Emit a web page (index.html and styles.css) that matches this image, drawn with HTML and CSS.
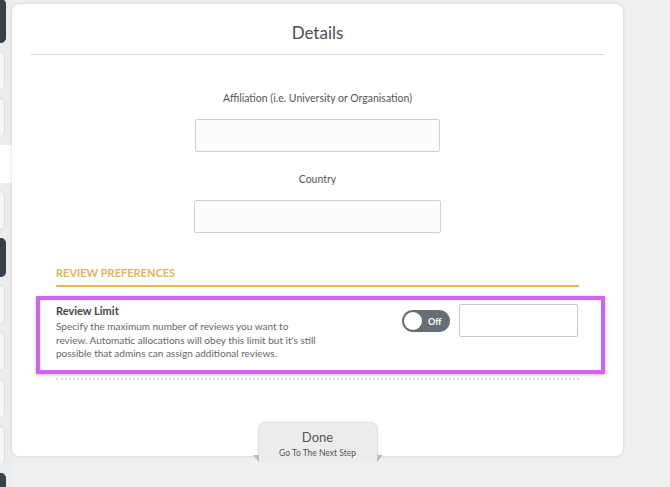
FILE: index.html
```html
<!DOCTYPE html>
<html lang="en">

<head>
    <meta charset="UTF-8">
    <meta name="viewport" content="width=device-width, initial-scale=1.0">
    <title>Details</title>
    <link rel="stylesheet" href="styles.css">
</head>

<body>
    <div class="layout">
        <nav class="rail">
            <span class="rail-tab dark first"></span>
            <span class="rail-tab"></span>
            <span class="rail-tab"></span>
            <span class="rail-gap"></span>
            <span class="rail-tab"></span>
            <span class="rail-tab dark"></span>
            <span class="rail-tab"></span>
            <span class="rail-tab"></span>
            <span class="rail-tab"></span>
            <span class="rail-tab"></span>
            <span class="rail-tab dark"></span>
        </nav>

        <main class="main">
            <div class="card">
                <h2 class="card-title">Details</h2>

                <div class="field first-field">
                    <label for="affiliation">Affiliation (i.e. University or Organisation)</label>
                    <input type="text" id="affiliation" class="text-input">
                </div>

                <div class="field country-field">
                    <label for="country">Country</label>
                    <input type="text" id="country" class="text-input wide">
                </div>

                <div class="prefs">
                    <h3 class="prefs-title">REVIEW PREFERENCES</h3>
                </div>

                <div class="highlight">
                    <div class="pref-row">
                        <div class="pref-text">
                            <h4>Review Limit</h4>
                            <p>Specify the maximum number of reviews you want to review. Automatic allocations will obey this limit but it's still possible that admins can assign additional reviews.</p>
                        </div>
                        <div class="pref-controls">
                            <span class="toggle"><span class="knob"></span>Off</span>
                            <input type="text" class="limit-input">
                        </div>
                    </div>
                </div>
                <div class="dotted"></div>

                <div class="done-wrap">
                    <button class="done">
                        <span class="done-main">Done</span>
                        <span class="done-sub">Go To The Next Step</span>
                    </button>
                </div>
            </div>
        </main>
    </div>
</body>

</html>
```

FILE: styles.css
```css
body {
    margin: 0;
    background: #efefef;
    font-family: 'Lato', 'Open Sans', sans-serif;
    color: #555;
    height: 487px;
    overflow: hidden;
}

.layout {
    display: flex;
    height: 100%;
}

/* left step rail */
.rail {
    width: 12px;
    flex-shrink: 0;
    display: flex;
    flex-direction: column;
    gap: 8px;
    background: #ececec;
    overflow: hidden;
}

.rail-tab {
    display: block;
    width: 4px;
    height: 37px;
    flex-shrink: 0;
    background: #f6f6f6;
    border: 1px solid #dcdcdc;
    border-left: none;
    border-radius: 0 5px 5px 0;
}

.rail-tab.dark {
    width: 5px;
    height: 37px;
    background: #36424d;
    border-color: #36424d;
}

.rail-tab.first {
    height: 42px;
    margin-top: -1px;
}

.rail-gap {
    display: block;
    height: 38px;
    flex-shrink: 0;
    background: #fff;
}

.main {
    flex: 1;
    padding-top: 4px;
}

.card {
    width: 611px;
    height: 452px;
    box-sizing: border-box;
    padding: 0 18px;
    background: #fff;
    border-radius: 7px;
    box-shadow: 0 0 3px rgba(0, 0, 0, 0.18);
    display: flex;
    flex-direction: column;
}

.card-title {
    margin: 0;
    padding: 18px 0 11px;
    font-size: 17px;
    font-weight: normal;
    text-align: center;
    color: #4a4f54;
    border-bottom: 1px solid #dedede;
}

.field {
    display: flex;
    flex-direction: column;
    align-items: center;
}

.field label {
    font-size: 10.5px;
    line-height: 14px;
    color: #555;
    margin-bottom: 14px;
}

.first-field {
    margin-top: 36px;
}

.country-field {
    margin-top: 20px;
}

.text-input {
    width: 245px;
    height: 33px;
    box-sizing: border-box;
    border: 1px solid #cfcfcf;
    border-radius: 2px;
    background: #fcfcfc;
}

.text-input.wide {
    width: 247px;
}

.prefs {
    margin: 33px 26px 0;
    border-bottom: 2px solid #efb24e;
}

.prefs-title {
    margin: 0;
    padding-bottom: 5px;
    font-size: 11px;
    line-height: 14px;
    font-weight: bold;
    color: #e8b35c;
}

.highlight {
    margin: 9px 0 0 6px;
    border: 4px solid #d65ff7;
    box-shadow: 0 1px 3px rgba(0, 0, 0, 0.25);
    padding: 4px 23px 0 16px;
    height: 66px;
}

.pref-row {
    display: flex;
    justify-content: space-between;
}

.pref-text h4 {
    margin: 0;
    font-size: 11px;
    line-height: 14px;
    color: #444;
}

.pref-text p {
    margin: 2px 0 0;
    width: 262px;
    font-size: 10px;
    line-height: 13.5px;
    color: #666;
}

.pref-controls {
    display: flex;
    align-items: flex-start;
    gap: 9px;
}

.toggle {
    margin-top: 6px;
    width: 48px;
    height: 22px;
    box-sizing: border-box;
    border-radius: 11px;
    background: #676f76;
    color: #fff;
    font-size: 9px;
    font-weight: bold;
    display: flex;
    align-items: center;
    gap: 6px;
    padding-left: 2px;
}

.knob {
    width: 18px;
    height: 18px;
    border-radius: 50%;
    background: #fff;
}

.limit-input {
    width: 119px;
    height: 33px;
    box-sizing: border-box;
    border: 1px solid #c8c8c8;
    border-radius: 2px;
    background: #fff;
}

.dotted {
    margin: 4px 26px 0;
    border-top: 2px dotted #d8d8d8;
}

.done-wrap {
    margin-top: auto;
    display: flex;
    justify-content: center;
    margin-bottom: -6px;
}

.done {
    position: relative;
    width: 120px;
    height: 40px;
    border: 1px solid #e0e0e0;
    border-bottom: none;
    border-radius: 8px 8px 0 0;
    background: #ececec;
    box-shadow: 0 -1px 2px rgba(0, 0, 0, 0.06);
    font-family: inherit;
    color: #555;
    display: flex;
    flex-direction: column;
    align-items: center;
    padding: 6px 0 0;
    cursor: pointer;
}

.done::before,
.done::after {
    content: "";
    position: absolute;
    bottom: 0;
    border-top: 7px solid #bcbcbc;
}

.done::before {
    left: -6px;
    border-left: 6px solid transparent;
}

.done::after {
    right: -6px;
    border-right: 6px solid transparent;
}

.done-main {
    font-size: 13px;
    line-height: 16px;
}

.done-sub {
    font-size: 8.5px;
    margin-top: 3px;
}
```
